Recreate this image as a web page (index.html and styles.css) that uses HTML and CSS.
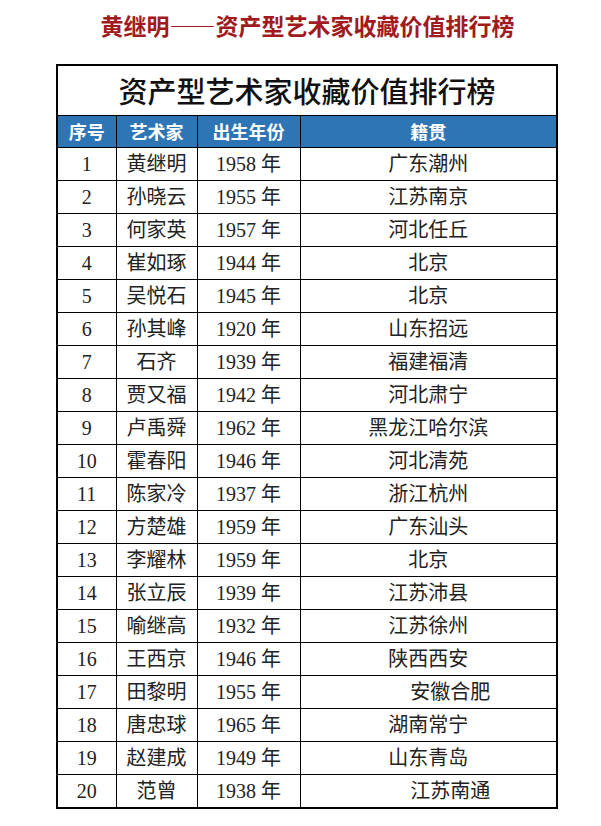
FILE: index.html
```html
<!DOCTYPE html>
<html lang="zh">
<head>
<meta charset="utf-8">
<link rel="stylesheet" href="styles.css">
</head>
<body>
<div class="page">
  <h1 class="headline">黄继明——资产型艺术家收藏价值排行榜</h1>
  <table class="rank">
    <colgroup>
      <col class="c1"><col class="c2"><col class="c3"><col class="c4">
    </colgroup>
    <thead>
      <tr class="title-row"><th colspan="4">资产型艺术家收藏价值排行榜</th></tr>
      <tr class="head-row"><th>序号</th><th>艺术家</th><th>出生年份</th><th>籍贯</th></tr>
    </thead>
    <tbody>
      <tr><td>1</td><td>黄继明</td><td>1958 年</td><td>广东潮州</td></tr>
      <tr><td>2</td><td>孙晓云</td><td>1955 年</td><td>江苏南京</td></tr>
      <tr><td>3</td><td>何家英</td><td>1957 年</td><td>河北任丘</td></tr>
      <tr><td>4</td><td>崔如琢</td><td>1944 年</td><td>北京</td></tr>
      <tr><td>5</td><td>吴悦石</td><td>1945 年</td><td>北京</td></tr>
      <tr><td>6</td><td>孙其峰</td><td>1920 年</td><td>山东招远</td></tr>
      <tr><td>7</td><td>石齐</td><td>1939 年</td><td>福建福清</td></tr>
      <tr><td>8</td><td>贾又福</td><td>1942 年</td><td>河北肃宁</td></tr>
      <tr><td>9</td><td>卢禹舜</td><td>1962 年</td><td>黑龙江哈尔滨</td></tr>
      <tr><td>10</td><td>霍春阳</td><td>1946 年</td><td>河北清苑</td></tr>
      <tr><td>11</td><td>陈家冷</td><td>1937 年</td><td>浙江杭州</td></tr>
      <tr><td>12</td><td>方楚雄</td><td>1959 年</td><td>广东汕头</td></tr>
      <tr><td>13</td><td>李耀林</td><td>1959 年</td><td>北京</td></tr>
      <tr><td>14</td><td>张立辰</td><td>1939 年</td><td>江苏沛县</td></tr>
      <tr><td>15</td><td>喻继高</td><td>1932 年</td><td>江苏徐州</td></tr>
      <tr><td>16</td><td>王西京</td><td>1946 年</td><td>陕西西安</td></tr>
      <tr><td>17</td><td>田黎明</td><td>1955 年</td><td class="shift">安徽合肥</td></tr>
      <tr><td>18</td><td>唐忠球</td><td>1965 年</td><td>湖南常宁</td></tr>
      <tr><td>19</td><td>赵建成</td><td>1949 年</td><td>山东青岛</td></tr>
      <tr><td>20</td><td>范曾</td><td>1938 年</td><td class="shift">江苏南通</td></tr>
    </tbody>
  </table>
</div>
</body>
</html>
```

FILE: styles.css
```css
html, body {
  margin: 0;
  padding: 0;
  background: #ffffff;
}

.page {
  width: 601px;
  padding-top: 10px;
}

.headline {
  margin: 0 0 0 14px;
  height: 54px;
  line-height: 30px;
  text-align: center;
  font-family: "Noto Sans CJK SC", sans-serif;
  font-weight: 700;
  font-size: 23px;
  color: #a11a20;
  letter-spacing: 0;
}

.rank {
  margin-left: 56px;
  width: 500px;
  border-collapse: collapse;
  border: 2px solid #000;
  table-layout: fixed;
  font-family: "Liberation Serif", "Noto Sans CJK SC", serif;
  font-size: 20px;
  color: #222;
}

.c1 { width: 59px; }
.c2 { width: 81px; }
.c3 { width: 103px; }
.c4 { width: 257px; }

.rank th,
.rank td {
  border: 1px solid #000;
  padding: 0;
  text-align: center;
  white-space: nowrap;
}

.title-row th {
  height: 49px;
  font-family: "Noto Sans CJK SC", sans-serif;
  font-weight: 500;
  font-size: 29px;
  color: #111;
  line-height: 49px;
  border-bottom: 1px solid #000;
}

.head-row th {
  height: 31px;
  background: #2e75b6;
  color: #fff;
  font-family: "Noto Sans CJK SC", sans-serif;
  font-weight: 700;
  font-size: 18px;
  line-height: 31px;
}

.rank td {
  height: 32px;
  line-height: 32px;
}

.rank td.shift {
  padding-left: 44px;
}
```
